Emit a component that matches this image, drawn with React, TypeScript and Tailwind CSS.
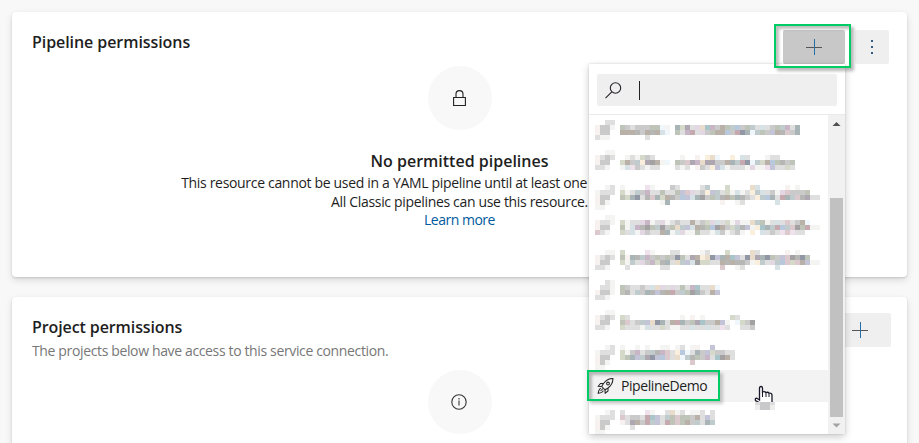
import React from "react";

const palette: Record<string, string> = {
  a: "#f4f4f3", b: "#dedfde", c: "#c9cac9", d: "#b6b6b5", e: "#a3a1a1",
  g: "#d5d9ca", G: "#bec4b8", p: "#c8b6c6", P: "#efe2ed", q: "#aea6b1",
  t: "#bfcbcd", T: "#a9b4b6", l: "#d6e2e6", w: "#f0f7fc", y: "#faeedd",
  k: "#dcc9cd", n: "#9297a5", o: "#b9b1a7", r: "#c6a9af", v: "#c4c4d8",
  m: "#eadcca", h: "#f7f1ef", s: "#a9c5ca", u: "#b9c9dd", z: "#e3d7e3",
};

type Mosaic = { top: number; icon: string[]; text: string[] };

const iconA = ["..ba", ".bba", "hcca", "bba."];
const iconB = ["..aa", "hbcb", "hcc.", "bba."];
const iconC = ["..ab", "abbb", "hcc.", "hca.", "aa.."];

const mosaics: Mosaic[] = [
  { top: 120, icon: ["..bb", "hcca", "hcc.", "baa."], text: [
    "",
    "GcbcccGGwa.TgqbzmspcoGtucGtblbcGtpbT",
    "ooodcodolw.GbprbzcGooucrnTwtGcvodkcT",
    ".....b",
  ] },
  { top: 150, icon: iconB, text: [
    "",
    ".abagcb.....a..h.ymw..y.lb...abb",
    "goctyqeoaw.GckqpmqqccoTtrnwtgouGdcG",
    "alPcbabb...bab.hcbyvlabbbazaaPvbbgb",
    "",
  ] },
  { top: 185, icon: iconC, text: [
    "a....Pa...cb....bt...g....ml.....h.a",
    "gabtcpbbGbbGvkzbcyvtbgalabytlbcazkcccG",
    "GgTnbdkTgodcuvlTecGtdoGTdcbytuTbrTtkdqbb",
    "........aT..........h..ab......l",
  ] },
  { top: 215, icon: ["..aa", "hbba", "hcc.", "kba."], text: [
    "",
    "gabbzpabzabcbbobcgzlbgazaamtGablbkbcow",
    "GalpdeGtecGmtvlodGueocgtdvaysTtrutkeGraa",
    "gblazcbboTalzaaGbbalcabca.y.lbcbPkPbb",
  ] },
  { top: 250, icon: iconB, text: [
    "g....Pa...bb....ab...g....mb.....h.a",
    "GhTdtpcGcGcnGbqoymnvTosvbnmqTnGcvkednG",
    "gatbzcpgdTbmtvleggbbododdcaytbztukgkovaa",
    ".b......bb..........k..ab......l",
  ] },
  { top: 280, icon: iconA, text: [
    "",
    "GcbbcblmzbzbGbpsbbmw",
    "GdbtcTdvdorctGeTcbov",
    "",
  ] },
  { top: 310, icon: iconB, text: [
    "",
    "gb..........a.h.a.....gb",
    "GkbctvmnTborTcGqsccova.wgceTt",
    "gbbbalbbgbaabblbblbbPb..bbccb",
  ].map((s) => s.slice(0, 27)) },
  { top: 345, icon: iconC, text: [
    "a..a.a..aa.ab.ah..v",
    "gacpbctdpkbyuwbTcvgccbb",
    "gGTvtqnvukbmwtdGcpbseob",
    "..............k",
  ] },
  { top: 410, icon: iconC, text: [
    "b....Pa..bmab.aab.b",
    "kbccbrsvbtGkGGcobvb",
    "hbqocrtvbrGkGoctbTt",
    "..b",
  ] },
];

function Mosaics() {
  return (
    <svg className="absolute left-0 top-0 h-[370px] w-[240px]" viewBox="589 64 240 370" shapeRendering="crispEdges">
      {mosaics.map((m) =>
        [0, 1, 2, 3, 4].map((r) => {
          const line = (m.icon[r] ?? "").padEnd(5, ".") + (m.text[r] ?? "");
          return line.split("").slice(0, 45).map((c, i) =>
            c === "." ? null : (
              <rect key={`${m.top}-${r}-${i}`} x={595 + i * 5} y={m.top + r * 5} width={5} height={5} fill={palette[c]} />
            ),
          );
        }),
      )}
    </svg>
  );
}

function Plus() {
  return (
    <svg width="16" height="16" viewBox="0 0 16 16" fill="none" shapeRendering="crispEdges">
      <path d="M0 8.5H16" stroke="#555" strokeWidth="1" />
      <path d="M8.5 0V16" stroke="#246fa5" strokeWidth="1" />
    </svg>
  );
}

function Rocket() {
  return (
    <svg width="17" height="16" viewBox="0 0 16 16" fill="none" stroke="#252525" strokeWidth="1.05">
      <path d="M15.4.6C11.5.5 8.5 2.3 5.8 5.8L4.2 8.5l3.3 3.3 2.7-1.6C13.8 7.5 15.5 4.5 15.4.6Z" />
      <path d="M6 5.5H3L.8 8.3l3.4.2M10.5 10v3l-2.8 2.2-.2-3.4" />
      <circle cx="10.5" cy="5.5" r="1.4" />
      <path d="M3.5 10.3C1.5 10.5 1.2 12.5.7 15.3c2.8-.4 4.8-.9 5-2.8M5.5 10.5 3 13" />
    </svg>
  );
}

function Popup() {
  return (
    <div className="absolute left-[589px] top-16 h-[370px] w-64 bg-white shadow-[0_3px_8px_rgba(0,0,0,0.2),0_0_2px_rgba(0,0,0,0.15)]">
      <div className="flex h-full flex-col">
        <div className="h-[51px] shrink-0 border-b border-[#eaeaea] px-2 pt-[10px]">
          <div className="flex h-8 items-center rounded-[2px] bg-[#efefef] pl-2">
            <svg width="17" height="17" viewBox="0 0 17 17" fill="none" stroke="#28222c" strokeWidth="1.1">
              <circle cx="10.5" cy="6" r="5.2" />
              <path d="M6.8 9.8.5 16.1" />
            </svg>
            <div className="ml-[17px] h-[19px] w-px bg-[#222]" />
          </div>
        </div>
        <div className="flex min-h-0 flex-1">
          <div className="flex-1 pt-[255px]">
            <div className="flex h-8 items-center bg-[#f3f3f3] pl-2">
              <Rocket />
              <span className="ml-[7px] whitespace-nowrap text-[14px] leading-5 tracking-[-0.42px]">PipelineDemo</span>
            </div>
          </div>
          <div className="flex w-[17px] flex-col items-center bg-[#f1f1f1]">
            <svg className="h-[17px] w-[17px] shrink-0" viewBox="0 0 17 17"><path d="M4.5 11 8.5 7l4 4Z" fill="#505050" /></svg>
            <div className="mt-[66px] h-[219px] w-[13px] shrink-0 bg-[#c1c1c1]" />
            <svg className="h-[17px] w-[17px] shrink-0" viewBox="0 0 17 17"><path d="M4.5 6.5 8.5 10.5l4-4Z" fill="#a3a3a3" /></svg>
          </div>
        </div>
      </div>
      <Mosaics />
    </div>
  );
}

function Pointer() {
  return (
    <svg className="absolute left-[754px] top-[385px] h-[25px] w-[21px]" viewBox="0 0 21 25">
      <path d="M5.5 15V3.2Q5.5 1.5 7 1.5t1.5 1.7V7Q10.5 6 12 7.5q2.2-.8 3 .7 3-.4 3 2.3v8H7L1.5 15.5Q.8 13 3 13.3Z" fill="#fff" stroke="#191929" strokeWidth="1.3" />
      <path d="M8.5 7V12M12 7.5V12M15 8.5V12" stroke="#191929" fill="none" />
      <path d="M1 17h5v3H1zM16 17h5v3h-5z" fill="#ddd" />
      <path d="M1 20h5v5H1zM16 20h5v5h-5z" fill="#ededed" />
      <path d="M6 17h10v8H6z" fill="#c9c9cb" />
    </svg>
  );
}

export default function App() {
  return (
    <div className="relative h-[443px] w-[919px] overflow-hidden bg-[#f8f8f8] font-['Open_Sans','Noto_Sans',sans-serif] text-[#1e1e1e]">
      <div className="flex flex-col gap-5 p-3">
        <section className="h-[265px] rounded-[4px] bg-white shadow-[0_3px_7px_rgba(0,0,0,0.13),0_1px_2px_rgba(0,0,0,0.12)]">
          <div className="flex h-[54px] justify-between pl-5 pr-[18px] pt-[18px]">
            <h2 className="whitespace-nowrap text-[16px] font-semibold leading-6 tracking-[-0.07px]">Pipeline permissions</h2>
            <div className="flex gap-[10px]">
              <button className="flex h-[34px] w-[62px] items-center justify-center rounded-[2px] bg-[#c8c8c8]"><Plus /></button>
              <button className="flex h-[34px] w-[34px] items-center justify-center rounded-[2px] bg-[#efefef]">
                <svg width="4" height="14" viewBox="0 0 4 14" fill="#315d83"><path d="M1 0h2v2H1zM1 6h2v2H1zM1 12h2v2H1z" /></svg>
              </button>
            </div>
          </div>
          <div className="flex flex-col items-center whitespace-nowrap text-[14px] leading-[19px]">
            <div className="flex h-16 w-16 items-center justify-center rounded-full bg-[#f8f8f8]">
              <svg className="mr-px" width="13" height="16" viewBox="0 0 13 16" fill="none" stroke="#222" strokeWidth="1.1"><path d="M.6 7.5h11.8v8H.6zM3 7.5v-3.4a3.5 3.5 0 0 1 7 0v3.4" /></svg>
            </div>
            <h3 className="mt-5 text-[16px] font-semibold leading-[23px]">No permitted pipelines</h3>
            <p className="pr-[13px] tracking-[-0.32px]">This resource cannot be used in a YAML pipeline until at least one pipeline is listed here.</p>
            <p className="tracking-[-0.33px]">All Classic pipelines can use this resource.</p>
            <a className="-mt-px tracking-[-0.5px] text-[#005a9e]">Learn more</a>
          </div>
        </section>
        <section className="h-[180px] shrink-0 rounded-[4px] bg-white shadow-[0_3px_7px_rgba(0,0,0,0.13),0_1px_2px_rgba(0,0,0,0.12)]">
          <div className="flex h-[73px] justify-between pl-5 pr-4 pt-4">
            <div className="whitespace-nowrap">
              <h2 className="pt-[2px] text-[16px] font-semibold leading-6 tracking-[-0.1px]">Project permissions</h2>
              <p className="mt-[2px] text-[14px] leading-5 tracking-[-0.36px] text-[#777]">The projects below have access to this service connection.</p>
            </div>
            <button className="flex h-[34px] w-[62px] items-center justify-center rounded-[2px] bg-[#efefef]"><Plus /></button>
          </div>
          <div className="flex justify-center">
            <div className="flex h-16 w-16 items-center justify-center rounded-full bg-[#f8f8f8]">
              <svg className="mb-px mr-px" width="16" height="16" viewBox="0 0 16 16" fill="none" stroke="#333" strokeWidth="1.1"><circle cx="8" cy="8" r="7.2" /><path d="M8 6.5v5M8 4v1.4" /></svg>
            </div>
          </div>
        </section>
      </div>
      <Popup />
      <div className="absolute left-[774px] top-6 h-11 w-[77px] border-2 border-[#00cc66] shadow-[3px_3px_3px_rgba(0,0,0,0.28),inset_3px_3px_3px_rgba(0,0,0,0.25)]" />
      <div className="absolute left-[587px] top-[370px] h-[31px] w-[133px] border-2 border-[#00cc66] shadow-[3px_3px_3px_rgba(0,0,0,0.2),inset_3px_3px_3px_rgba(0,0,0,0.25)]" />
      <Pointer />
    </div>
  );
}
